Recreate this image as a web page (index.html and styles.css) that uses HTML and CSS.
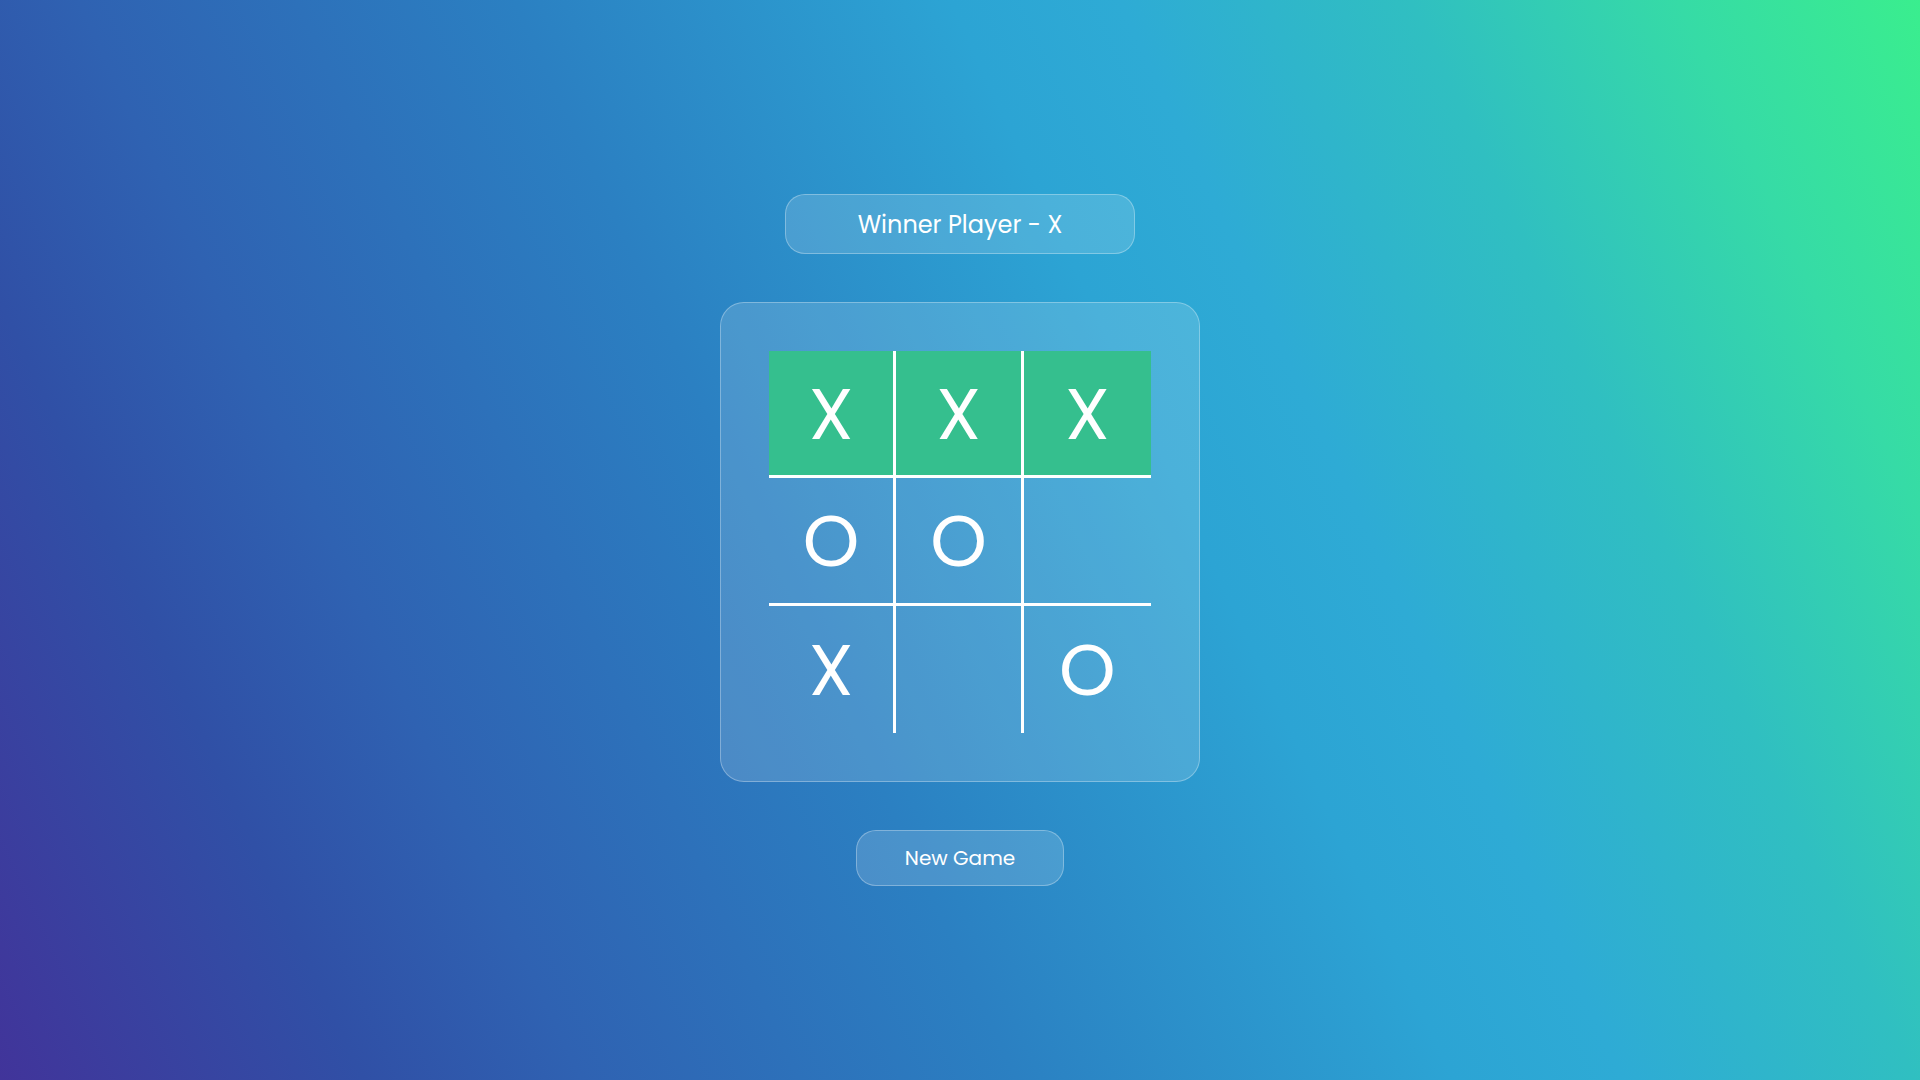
FILE: index.html
```html
<!DOCTYPE html>
<html lang="en">
<head>
<meta charset="utf-8">
<title>Tic Tac Toe</title>
<link rel="stylesheet" href="styles.css">
</head>
<body>
<main class="app">
  <div class="status">Winner Player - X</div>
  <div class="board">
    <div class="grid">
      <div class="cell win br bb">X</div>
      <div class="cell win br bb">X</div>
      <div class="cell win bb">X</div>
      <div class="cell br bb">O</div>
      <div class="cell br bb">O</div>
      <div class="cell bb"></div>
      <div class="cell br">X</div>
      <div class="cell br"></div>
      <div class="cell">O</div>
    </div>
  </div>
  <button class="new-game" type="button">New Game</button>
</main>
</body>
</html>
```
FILE: styles.css
```css
* { box-sizing: border-box; }
html, body { margin: 0; padding: 0; height: 100%; }
body {
  width: 1920px;
  height: 1080px;
  overflow: hidden;
  font-family: "Poppins", Inter, "Noto Sans", sans-serif;
  color: #fff;
  background: linear-gradient(65deg,
    #41349a 0%,
    #3050a6 15%,
    #2f62b2 24%,
    #2b80c2 42%,
    #2ca4d4 60%,
    #2eabd5 67%,
    #30bfc1 79%,
    #36dba6 90%,
    #3aee8e 100%);
}
.app {
  height: 1080px;
  display: flex;
  flex-direction: column;
  align-items: center;
  justify-content: center;
  gap: 48px;
}
.status {
  width: 350px;
  height: 60px;
  display: flex;
  align-items: center;
  justify-content: center;
  font-size: 24px;
  font-weight: 400;
  background: rgba(255, 255, 255, 0.15);
  border: 1px solid rgba(255, 255, 255, 0.3);
  border-radius: 20px;
}
.board {
  width: 480px;
  height: 480px;
  padding: 48px;
  background: rgba(255, 255, 255, 0.15);
  border: 1px solid rgba(255, 255, 255, 0.3);
  border-radius: 24px;
}
.grid {
  width: 382px;
  height: 382px;
  display: grid;
  grid-template-columns: repeat(3, 1fr);
  grid-template-rows: repeat(3, 1fr);
}
.cell {
  display: flex;
  align-items: center;
  justify-content: center;
  font-family: "Poppins", Inter, "Noto Sans", sans-serif;
  font-size: 72px;
  font-weight: 400;
  line-height: 1;
  padding-top: 2px;
}
.cell.br { border-right: 3px solid #fff; }
.cell.bb { border-bottom: 3px solid #fff; }
.cell.win { background: #35bf8e; }
.new-game {
  width: 208px;
  height: 56px;
  font-family: "Poppins", Inter, "Noto Sans", sans-serif;
  font-size: 20px;
  color: #fff;
  background: rgba(255, 255, 255, 0.15);
  border: 1px solid rgba(255, 255, 255, 0.3);
  border-radius: 20px;
  cursor: pointer;
}
```
